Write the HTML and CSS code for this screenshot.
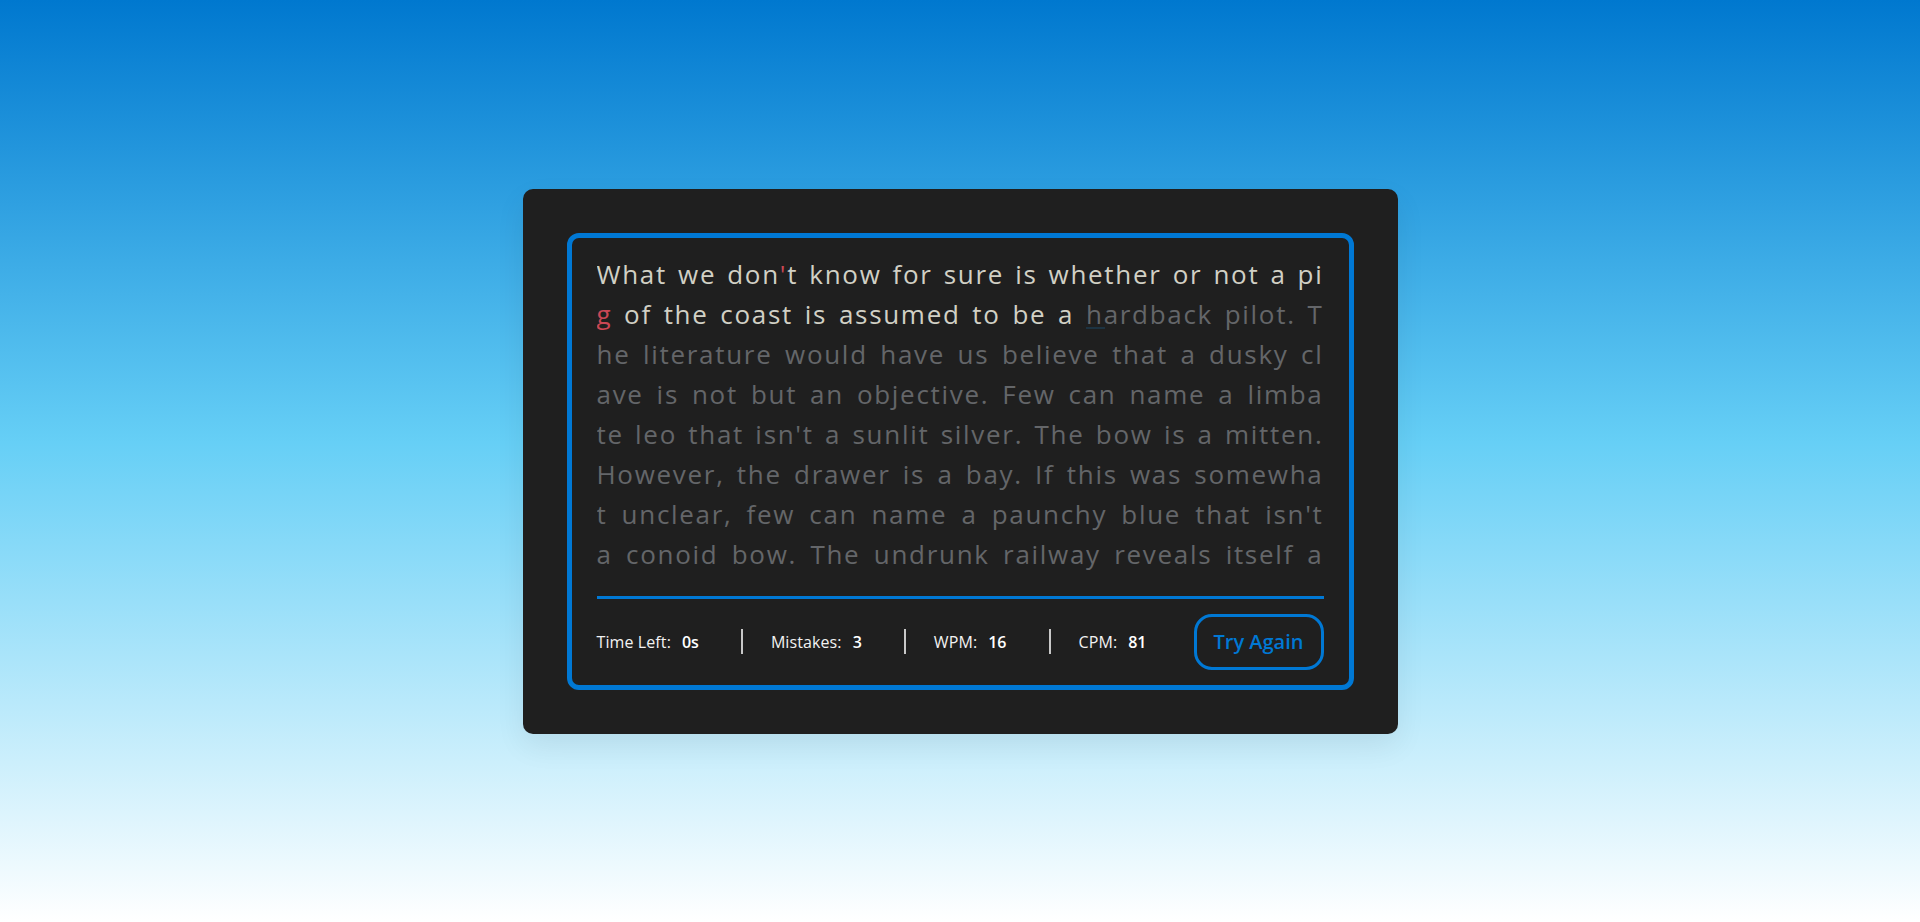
FILE: index.html
```html
<!DOCTYPE html>
<html lang="en">
<head>
<meta charset="utf-8">
<title>Typing Speed Test</title>
<link rel="stylesheet" href="styles.css">
</head>
<body>
<div class="wrapper">
  <div class="content-box">
    <div class="typing-text">
      <p>
        <span class="line"><span class="correct">What we don</span><span class="incorrect">'</span><span class="correct">t know for sure is whether or not a pi</span></span>
        <span class="line"><span class="incorrect">g</span><span class="correct"> of the coast is assumed to be a </span><span class="active">h</span>ardback pilot. T</span>
        <span class="line">he literature would have us believe that a dusky cl</span>
        <span class="line">ave is not but an objective. Few can name a limba</span>
        <span class="line">te leo that isn't a sunlit silver. The bow is a mitten.</span>
        <span class="line">However, the drawer is a bay. If this was somewha</span>
        <span class="line">t unclear, few can name a paunchy blue that isn't</span>
        <span class="line">a conoid bow. The undrunk railway reveals itself a</span>
      </p>
    </div>
    <div class="content">
      <ul class="result-details">
        <li class="stat"><p>Time Left:</p><span>0s</span></li>
        <li class="stat"><p>Mistakes:</p><span>3</span></li>
        <li class="stat"><p>WPM:</p><span>16</span></li>
        <li class="stat"><p>CPM:</p><span>81</span></li>
      </ul>
      <button class="retry">Try Again</button>
    </div>
  </div>
</div>
</body>
</html>
```
FILE: styles.css
```css
* {
  box-sizing: border-box;
}

html, body {
  margin: 0;
  padding: 0;
}

body {
  min-height: 100vh;
  display: flex;
  align-items: center;
  justify-content: center;
  background: linear-gradient(to bottom, #0078cf 0%, #66cff6 48%, #ffffff 100%);
  font-family: "Open Sans", "Noto Sans", sans-serif;
}

.wrapper {
  width: 875px;
  padding: 44px;
  background: #1f1f1f;
  border-radius: 10px;
  box-shadow: 0 12px 30px rgba(0, 0, 0, 0.07);
}

.content-box {
  border: 5px solid #0078d4;
  border-radius: 12px;
  padding: 16px 25px 0;
}

.typing-text {
  height: 320px;
  overflow: hidden;
}

.typing-text p {
  margin: 0;
  color: #646669;
  font-size: 26px;
  letter-spacing: 1.7px;
}

.line {
  display: block;
  height: 40px;
  line-height: 40px;
  white-space: nowrap;
  text-align: justify;
  text-align-last: justify;
}

.correct {
  color: #d1d0c5;
}

.incorrect {
  color: #ca4754;
}

.active {
  position: relative;
}

.active::after {
  content: "";
  position: absolute;
  left: 0;
  right: -1px;
  bottom: 3px;
  height: 2px;
  background: #1d3342;
}

.content {
  margin-top: 22px;
  border-top: 3px solid #0078d4;
  padding: 15px 0;
  display: flex;
  align-items: center;
  justify-content: space-between;
}

.result-details {
  display: flex;
  align-items: center;
  margin: 0;
  padding: 0;
  list-style: none;
}

.stat {
  display: flex;
  align-items: center;
  height: 25px;
  color: #f2f2f2;
  font-size: 16px;
}

.stat:not(:first-child) {
  padding-left: 28px;
  border-left: 2px solid #c8c8c8;
}

.stat:not(:last-child) {
  margin-right: 42px;
}

.stat p {
  margin: 0;
  font-weight: 500;
  letter-spacing: 0.1px;
}

.stat span {
  margin-left: 11px;
  font-weight: 600;
  color: #ffffff;
}

.retry {
  width: 130px;
  height: 56px;
  border: 3px solid #0078d4;
  border-radius: 18px;
  background: transparent;
  color: #0078d4;
  font-family: "Open Sans", "Noto Sans", sans-serif;
  font-size: 20px;
  font-weight: 600;
  cursor: pointer;
}
```
